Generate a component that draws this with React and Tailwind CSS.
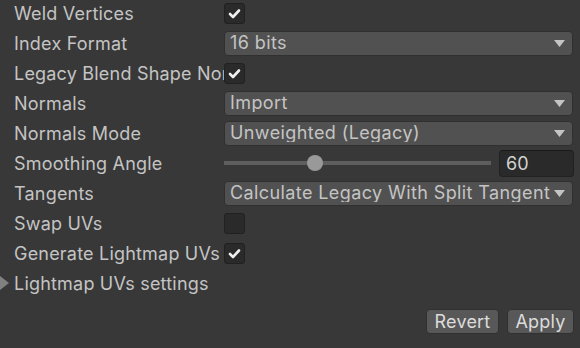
import React from "react";

const font = { fontFamily: "Inter, 'Noto Sans', sans-serif" };

function Check({ on }) {
  return (
    <div className="w-[21px] h-[21px] rounded-[3px] bg-[#2a2a2a] border border-[#212121] flex items-center justify-center">
      {on && (
        <svg width="13" height="11" viewBox="0 0 13 11">
          <path d="M2 6 L5 9 L11 2.5" fill="none" stroke="#eeeeee" strokeWidth="2.6" strokeLinecap="round" strokeLinejoin="round" />
        </svg>
      )}
    </div>
  );
}

function Dropdown({ value }) {
  return (
    <div className="w-[349px] h-[25px] rounded-[4px] bg-[#515151] border border-[#303030] flex items-center pl-[5px] pr-[7px]">
      <span className="flex-1 overflow-hidden whitespace-nowrap text-[#c4c4c4] leading-none tracking-[0.4px]">{value}</span>
      <svg width="11" height="7" viewBox="0 0 11 7" className="shrink-0 ml-[4px]">
        <path d="M0 0 L11 0 L5.5 7 Z" fill="#c4c4c4" />
      </svg>
    </div>
  );
}

function Row({ label, children }) {
  return (
    <div className="h-[30px] flex items-center">
      <div className="w-[224px] shrink-0 pl-[14px] overflow-hidden whitespace-nowrap text-[#c4c4c4]">{label}</div>
      <div className="flex items-center">{children}</div>
    </div>
  );
}

export default function App() {
  return (
    <div className="w-[580px] h-[348px] bg-[#383838] text-[18px] tracking-[0.2px] relative overflow-hidden" style={font}>
      <div className="-mt-[2px]">
        <Row label="Weld Vertices"><Check on /></Row>
        <Row label="Index Format"><Dropdown value="16 bits" /></Row>
        <Row label="Legacy Blend Shape Normals"><Check on /></Row>
        <Row label="Normals"><Dropdown value="Import" /></Row>
        <Row label="Normals Mode"><Dropdown value="Unweighted (Legacy)" /></Row>
        <Row label="Smoothing Angle">
          <div className="w-[267px] h-[30px] relative flex items-center">
            <div className="w-full h-[4px] bg-[#5e5e5e]" />
            <div className="absolute left-[83px] top-[7px] w-[16px] h-[16px] rounded-full bg-[#999999]" />
          </div>
          <div className="ml-[8px] w-[75px] h-[27px] rounded-[4px] bg-[#2a2a2a] border border-[#212121] border-t-[#1a1a1a] flex items-center pl-[6px] text-[#d2d2d2]">
            60
          </div>
        </Row>
        <Row label="Tangents"><Dropdown value="Calculate Legacy With Split Tangents" /></Row>
        <Row label="Swap UVs"><Check /></Row>
        <Row label="Generate Lightmap UVs"><Check on /></Row>
        <div className="h-[30px] flex items-center">
          <svg width="10" height="14" viewBox="0 0 10 14" className="mr-[4px]">
            <path d="M0 0 L9 7 L0 14 Z" fill="#808080" />
          </svg>
          <span className="text-[#c4c4c4]">Lightmap UVs settings</span>
        </div>
      </div>
      <div className="absolute right-[6px] bottom-[14px] flex gap-[8px]">
        <button className="w-[73px] h-[25px] rounded-[4px] bg-[#585858] border border-[#303030] text-[#dcdcdc] leading-none">Revert</button>
        <button className="w-[67px] h-[25px] rounded-[4px] bg-[#585858] border border-[#303030] text-[#dcdcdc] leading-none">Apply</button>
      </div>
    </div>
  );
}
